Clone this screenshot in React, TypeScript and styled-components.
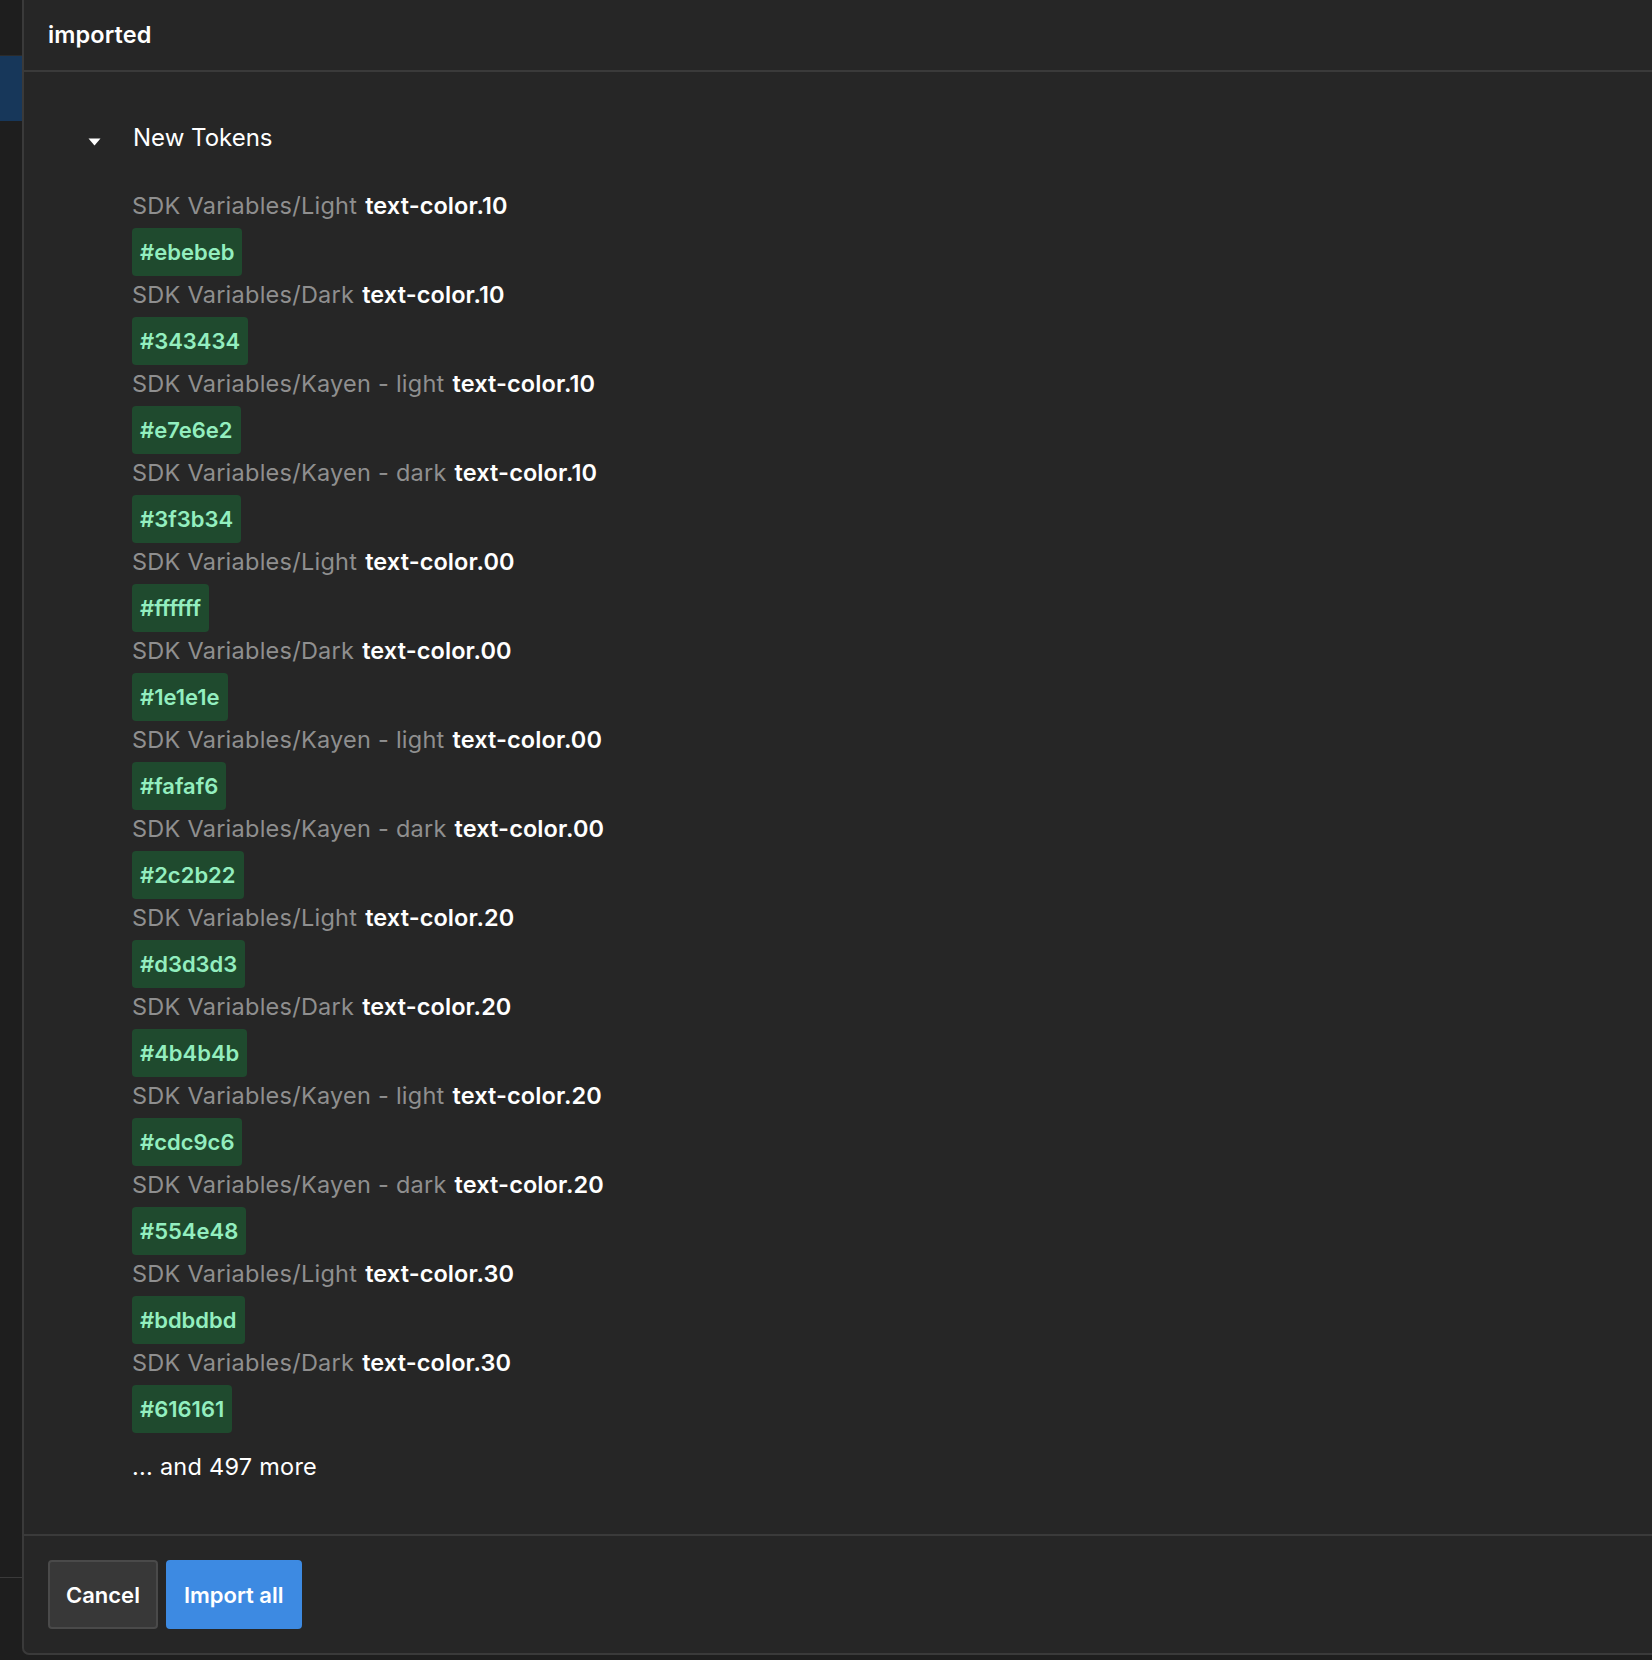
import React from "react";
import styled, { createGlobalStyle } from "styled-components";

const GlobalStyle = createGlobalStyle`
  html, body {
    margin: 0;
    padding: 0;
    background: #1e1e1e;
    overflow: hidden;
  }
  body {
    font-family: Inter, "Noto Sans", "Liberation Sans", sans-serif;
    -webkit-font-smoothing: antialiased;
  }
  * { box-sizing: border-box; }
`;

const Page = styled.div`
  display: flex;
  width: 1652px;
  height: 1660px;
  background: #1e1e1e;
`;

const Sidebar = styled.div`
  width: 22px;
  flex: none;
  display: flex;
  flex-direction: column;
  background: #1e1e1e;
`;

const SidebarTop = styled.div`
  height: 56px;
  border-bottom: 1px solid #2b2b2b;
`;

const SidebarActive = styled.div`
  height: 65px;
  background: #17375a;
`;

const SidebarFill = styled.div`
  flex: 1;
  border-bottom: 1px solid #3a3a3a;
`;

const SidebarBottom = styled.div`
  height: 82px;
`;

const Modal = styled.div`
  flex: none;
  width: 1640px;
  height: 1655px;
  display: flex;
  flex-direction: column;
  background: #262626;
  border-left: 2px solid #3a3a3a;
  border-bottom: 2px solid #3a3a3a;
  border-bottom-left-radius: 7px;
`;

const Header = styled.div`
  height: 72px;
  flex: none;
  display: flex;
  align-items: center;
  padding: 0 0 2px 24px;
  border-bottom: 2px solid #3a3a3a;
  color: #ffffff;
  font-size: 23.5px;
  letter-spacing: 0.1px;
  font-weight: 600;
`;

const Body = styled.div`
  flex: 1;
  display: flex;
  flex-direction: column;
  padding: 49px 0 0 64px;
`;

const GroupHeading = styled.div`
  display: flex;
  align-items: center;
  height: 32px;
  gap: 32px;
  color: #ffffff;
  font-size: 24px;
  font-weight: 400;
`;

const Chevron = styled.svg`
  width: 13px;
  height: 8px;
  flex: none;
  margin-top: 10px;
`;

const TokenList = styled.div`
  display: flex;
  flex-direction: column;
  margin: 35px 0 0 44px;
`;

const TokenItem = styled.div`
  display: flex;
  flex-direction: column;
  align-items: flex-start;
  height: 89px;
`;

const TokenLabel = styled.div`
  display: flex;
  gap: 8px;
  height: 35px;
  line-height: 36px;
  font-size: 23.5px;
  letter-spacing: 0.25px;
  white-space: nowrap;
`;

const SetName = styled.span`
  color: #8f8f8f;
  font-weight: 400;
`;

const TokenName = styled.span`
  color: #ffffff;
  font-weight: 600;
  letter-spacing: 0.1px;
`;

const ValueBadge = styled.div`
  margin-top: 5px;
  height: 48px;
  line-height: 48px;
  padding: 0 8px;
  border-radius: 4px;
  background: #1f4a2e;
  color: #93eebf;
  font-size: 22px;
  font-weight: 600;
`;

const More = styled.div`
  margin-top: 16px;
  line-height: 34px;
  font-size: 23.5px;
  letter-spacing: 0.25px;
  color: #ffffff;
`;

const Footer = styled.div`
  flex: none;
  display: flex;
  gap: 8px;
  padding: 24px;
  border-top: 2px solid #3a3a3a;
`;

const Button = styled.button<{ $primary?: boolean }>`
  height: 69px;
  padding: 0 16px;
  border-radius: 4px;
  border: 2px solid ${(p) => (p.$primary ? "#3d8ae2" : "#4a4a4a")};
  background: ${(p) => (p.$primary ? "#3d8ae2" : "#383838")};
  color: #ffffff;
  font-family: inherit;
  font-size: 22px;
  font-weight: 600;
  cursor: pointer;
`;

const tokens: [string, string, string][] = [
  ["SDK Variables/Light", "text-color.10", "#ebebeb"],
  ["SDK Variables/Dark", "text-color.10", "#343434"],
  ["SDK Variables/Kayen - light", "text-color.10", "#e7e6e2"],
  ["SDK Variables/Kayen - dark", "text-color.10", "#3f3b34"],
  ["SDK Variables/Light", "text-color.00", "#ffffff"],
  ["SDK Variables/Dark", "text-color.00", "#1e1e1e"],
  ["SDK Variables/Kayen - light", "text-color.00", "#fafaf6"],
  ["SDK Variables/Kayen - dark", "text-color.00", "#2c2b22"],
  ["SDK Variables/Light", "text-color.20", "#d3d3d3"],
  ["SDK Variables/Dark", "text-color.20", "#4b4b4b"],
  ["SDK Variables/Kayen - light", "text-color.20", "#cdc9c6"],
  ["SDK Variables/Kayen - dark", "text-color.20", "#554e48"],
  ["SDK Variables/Light", "text-color.30", "#bdbdbd"],
  ["SDK Variables/Dark", "text-color.30", "#616161"],
];

export default function App() {
  return (
    <>
      <GlobalStyle />
      <Page>
        <Sidebar>
          <SidebarTop />
          <SidebarActive />
          <SidebarFill />
          <SidebarBottom />
        </Sidebar>
        <Modal>
          <Header>imported</Header>
          <Body>
            <GroupHeading>
              <Chevron viewBox="0 0 13 8">
                <path d="M0.5 0.5 L12.5 0.5 L6.5 7.5 Z" fill="#ffffff" />
              </Chevron>
              New Tokens
            </GroupHeading>
            <TokenList>
              {tokens.map(([set, name, value], i) => (
                <TokenItem key={i}>
                  <TokenLabel>
                    <SetName>{set}</SetName>
                    <TokenName>{name}</TokenName>
                  </TokenLabel>
                  <ValueBadge>{value}</ValueBadge>
                </TokenItem>
              ))}
              <More>... and 497 more</More>
            </TokenList>
          </Body>
          <Footer>
            <Button>Cancel</Button>
            <Button $primary>Import all</Button>
          </Footer>
        </Modal>
      </Page>
    </>
  );
}
